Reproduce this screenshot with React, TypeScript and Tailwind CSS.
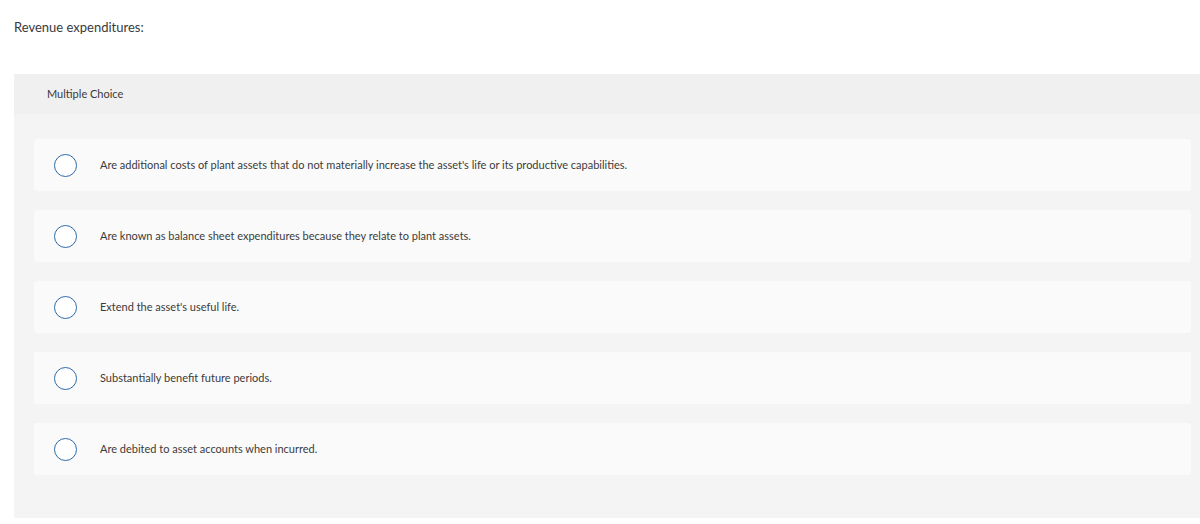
import React from 'react';

const choices = [
  "Are additional costs of plant assets that do not materially increase the asset's life or its productive capabilities.",
  'Are known as balance sheet expenditures because they relate to plant assets.',
  "Extend the asset's useful life.",
  'Substantially benefit future periods.',
  'Are debited to asset accounts when incurred.',
];

export default function App() {
  return (
    <div className="w-[1200px] h-[524px] bg-white overflow-hidden font-['Lato',sans-serif] text-[#3a3a3a]">
      {/* Question prompt */}
      <div className="pl-[14px] pt-[18px] h-[74px] text-[13px] leading-[18px]">Revenue expenditures:</div>

      <div className="ml-[14px] bg-[#f4f4f4] h-[444px]">
        <div className="h-[40px] bg-[#f0f0f0] pl-[33px] flex items-center text-[11px]">
          Multiple Choice
        </div>

        <div className="pt-[25px] pl-[20px] pr-[9px] flex flex-col gap-[19px]">
          {choices.map((text, i) => (
            <label key={i} className="h-[52px] bg-[#fafafa] rounded-[3px] flex items-center">
              <span className="ml-[20px] w-[23px] h-[23px] rounded-full border-[1.5px] border-[#2d6aa6] bg-white shrink-0" />
              <span className="ml-[23px] text-[11px] pt-[1px]">{text}</span>
            </label>
          ))}
        </div>
      </div>
    </div>
  );
}
